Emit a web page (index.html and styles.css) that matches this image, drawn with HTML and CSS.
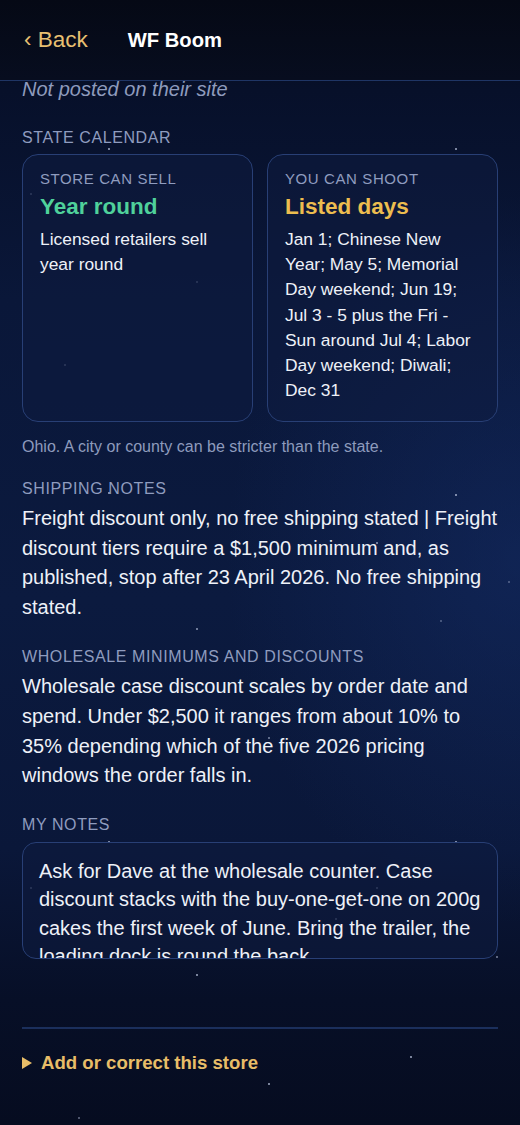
FILE: index.html
```html
<!DOCTYPE html>
<html lang="en">
<head>
<meta charset="utf-8">
<title>WF Boom</title>
<link rel="stylesheet" href="styles.css">
</head>
<body>
<div class="stars" aria-hidden="true"></div>
<header class="topbar">
  <a class="back" href="#">‹ Back</a>
  <h1 class="title">WF Boom</h1>
</header>
<main class="content">
  <p class="muted-italic">Not posted on their site</p>

  <h2 class="label label-first">State calendar</h2>
  <div class="cards">
    <div class="card">
      <div class="card-label">Store can sell</div>
      <div class="card-title green">Year round</div>
      <div class="card-body">Licensed retailers sell year round</div>
    </div>
    <div class="card">
      <div class="card-label">You can shoot</div>
      <div class="card-title gold">Listed days</div>
      <div class="card-body">Jan 1; Chinese New Year; May 5; Memorial Day weekend; Jun 19; Jul 3 - 5 plus the Fri - Sun around Jul 4; Labor Day weekend; Diwali; Dec 31</div>
    </div>
  </div>
  <p class="footnote">Ohio. A city or county can be stricter than the state.</p>

  <h2 class="label">Shipping notes</h2>
  <p class="para">Freight discount only, no free shipping stated | Freight discount tiers require a $1,500 minimum and, as published, stop after 23 April 2026. No free shipping stated.</p>

  <h2 class="label label-after-para">Wholesale minimums and discounts</h2>
  <p class="para">Wholesale case discount scales by order date and spend. Under $2,500 it ranges from about 10% to 35% depending which of the five 2026 pricing windows the order falls in.</p>

  <h2 class="label label-notes">My notes</h2>
  <div class="notes">Ask for Dave at the wholesale counter. Case discount stacks with the buy-one-get-one on 200g cakes the first week of June. Bring the trailer, the loading dock is round the back.</div>

  <hr class="divider">
  <div class="details"><span class="tri"></span>Add or correct this store</div>
</main>
</body>
</html>
```
FILE: styles.css
```css
* { box-sizing: border-box; }
html, body { margin: 0; padding: 0; }
body {
  width: 520px;
  height: 1125px;
  overflow: hidden;
  position: relative;
  font-family: "Liberation Sans", Arial, sans-serif;
  color: #eef1f8;
  background:
    radial-gradient(ellipse 420px 520px at 520px 560px, rgba(22,48,110,0.45), rgba(22,48,110,0) 70%),
    linear-gradient(180deg, #050a18 0px, #07102a 90px, #0a1739 300px, #0b1a3f 600px, #0a1739 850px, #070f27 1000px, #060c20 1125px);
}
.stars {
  position: absolute;
  left: 0; top: 0;
  width: 2px; height: 2px;
  border-radius: 50%;
  background: transparent;
  box-shadow:
    108px 148px 0 0 rgba(200,210,235,0.8),
    455px 148px 0 0 rgba(200,210,235,0.8),
    30px 193px 0 0 rgba(200,210,235,0.4),
    196px 281px 0 0 rgba(200,210,235,0.4),
    64px 364px 0 0 rgba(200,210,235,0.4),
    108px 492px 0 0 rgba(200,210,235,0.8),
    455px 494px 0 0 rgba(200,210,235,0.8),
    376px 542px 0 0 rgba(200,210,235,0.7),
    508px 581px 0 0 rgba(200,210,235,0.4),
    196px 628px 0 0 rgba(200,210,235,0.7),
    440px 620px 0 0 rgba(200,210,235,0.4),
    64px 715px 0 0 rgba(200,210,235,0.6),
    268px 737px 0 0 rgba(200,210,235,0.6),
    108px 841px 0 0 rgba(200,210,235,0.8),
    455px 841px 0 0 rgba(200,210,235,0.8),
    30px 887px 0 0 rgba(200,210,235,0.4),
    376px 887px 0 0 rgba(200,210,235,0.4),
    335px 918px 0 0 rgba(200,210,235,0.4),
    496px 956px 0 0 rgba(200,210,235,0.6),
    196px 974px 0 0 rgba(200,210,235,0.8),
    410px 1056px 0 0 rgba(200,210,235,0.8),
    268px 1083px 0 0 rgba(200,210,235,0.8),
    78px 1117px 0 0 rgba(200,210,235,0.5);
  z-index: 0;
}
.topbar {
  position: relative;
  z-index: 2;
  height: 81px;
  display: flex;
  align-items: center;
  padding: 0 24px;
  background: linear-gradient(180deg, #050915 0%, #070d1f 100%);
  border-bottom: 1px solid #1f3565;
}
.back {
  color: #e8c072;
  text-decoration: none;
  font-size: 22.5px;
  line-height: 26px;
  margin-right: 40px;
}
.title {
  margin: 0;
  font-size: 20.2px;
  line-height: 26px;
  font-weight: 700;
  color: #ffffff;
}
.content {
  position: relative;
  z-index: 1;
  padding: 0 22px;
}
.muted-italic {
  margin: -3px 0 0;
  font-style: italic;
  font-size: 20px;
  line-height: 22px;
  color: #8e9bbd;
}
.label {
  margin: 23px 0 0;
  font-size: 16px;
  line-height: 18px;
  font-weight: 400;
  letter-spacing: 0.6px;
  text-transform: uppercase;
  color: #8f9cbf;
}
.label-first { margin-top: 29px; }
.label-after-para { margin-top: 26px; }
.label-notes { margin-top: 25px; }
.cards {
  display: grid;
  grid-template-columns: 1fr 1fr;
  gap: 14px;
  margin-top: 7px;
}
.card {
  border: 1px solid #283f75;
  border-radius: 16px;
  background: rgba(14,27,64,0.55);
  padding: 15px 17px 17px;
  min-height: 268px;
}
.card-label {
  font-size: 15px;
  line-height: 18px;
  letter-spacing: 0.6px;
  text-transform: uppercase;
  color: #8f9cbf;
}
.card-title {
  margin-top: 5px;
  font-size: 22.5px;
  line-height: 28px;
  font-weight: 700;
}
.green { color: #4fd19b; }
.gold { color: #ecbd4f; }
.card-body {
  margin-top: 6px;
  font-size: 17.4px;
  line-height: 25.2px;
  color: #eef1f8;
}
.footnote {
  margin: 15px 0 0;
  font-size: 16px;
  line-height: 20px;
  color: #8e9bbd;
}
.para {
  margin: 6px 0 0;
  font-size: 20px;
  line-height: 29.6px;
  color: #eef1f8;
}
.notes {
  margin-top: 8px;
  height: 117px;
  overflow: hidden;
  border: 1px solid #283f75;
  border-radius: 14px;
  background: rgba(14,27,64,0.55);
  padding: 14px 16px 0;
  font-size: 20px;
  line-height: 28.5px;
  color: #eef1f8;
}
.divider {
  margin: 68px 0 0;
  border: 0;
  height: 2px;
  background: #1b2f5c;
}
.details {
  margin-top: 22px;
  display: flex;
  align-items: center;
  font-size: 18.6px;
  line-height: 24px;
  font-weight: 700;
  color: #e8bd68;
}
.tri {
  width: 0; height: 0;
  border-top: 6px solid transparent;
  border-bottom: 6px solid transparent;
  border-left: 10px solid #e8bd68;
  margin-right: 9px;
}
```
